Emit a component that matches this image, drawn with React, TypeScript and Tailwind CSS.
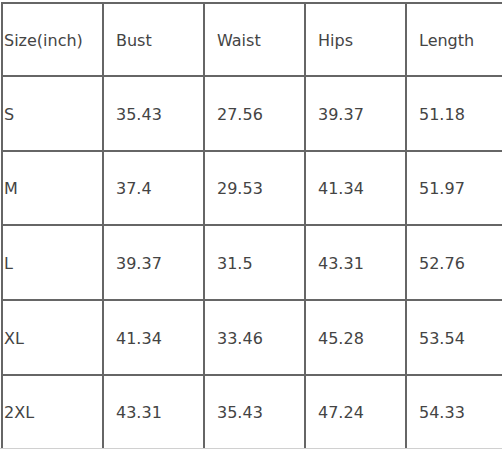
const header = ["Size(inch)", "Bust", "Waist", "Hips", "Length"];
const rows = [
  ["S", "35.43", "27.56", "39.37", "51.18"],
  ["M", "37.4", "29.53", "41.34", "51.97"],
  ["L", "39.37", "31.5", "43.31", "52.76"],
  ["XL", "41.34", "33.46", "45.28", "53.54"],
  ["2XL", "43.31", "35.43", "47.24", "54.33"],
];
const heights = ["h-[73px]", "h-[75px]", "h-[74px]", "h-[75px]", "h-[75px]", "h-[74px]"];

export default function App() {
  const all = [header, ...rows];
  return (
    <div className="w-[502px] h-[450px] overflow-hidden bg-white pl-[1px] pt-[2px]" style={{ fontFamily: '"DejaVu Sans", Verdana, sans-serif' }}>
      <div className="w-[520px]">
        {all.map((r, i) => (
          <div key={i} className={`flex ${heights[i]} border-t-2 border-[#666]`}>
            {r.map((c, j) => (
              <div
                key={j}
                className={`flex items-center border-l-2 border-[#666] text-[16px] text-[#444] ${j === 0 ? "w-[101px] pl-[1px]" : "w-[101px] pl-[12px]"}`}
              >
                <span className="pt-[2px]">{c}</span>
              </div>
            ))}
          </div>
        ))}
        <div className="h-[2px] border-t border-[#d0d0d0] -ml-[1px]" />
      </div>
    </div>
  );
}
